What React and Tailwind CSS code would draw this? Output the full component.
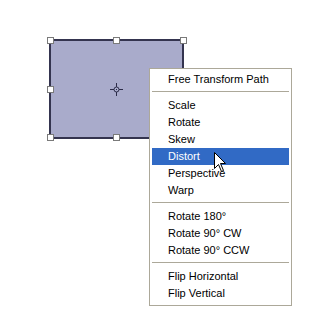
import React from 'react';

const groups = [
    ['Free Transform Path'],
    ['Scale', 'Rotate', 'Skew', 'Distort', 'Perspective', 'Warp'],
    ['Rotate 180°', 'Rotate 90° CW', 'Rotate 90° CCW'],
    ['Flip Horizontal', 'Flip Vertical'],
];

const Handle = ({ x, y }) => (
    <div
        className="absolute w-[7px] h-[7px] bg-white border border-[#7a7a7a]"
        style={{ left: x - 3, top: y - 3 }}
    />
);

const App = () => {
    const active = 'Distort';

    return (
        <div className="relative w-[311px] h-[312px] bg-white overflow-hidden" style={{ fontFamily: '"Liberation Sans", Arial, sans-serif' }}>
            {/* path shape */}
            <div className="absolute left-[49px] top-[39px] w-[135px] h-[100px] bg-[#a9abcb] border-2 border-[#34344f] rounded-[2px]" />

            {/* center point */}
            <svg className="absolute left-[109px] top-[82px]" width="15" height="15" viewBox="0 0 15 15">
                <circle cx="7.5" cy="7.5" r="2.5" fill="none" stroke="#2b2b48" strokeWidth="1" />
                <line x1="7.5" y1="1" x2="7.5" y2="5" stroke="#2b2b48" strokeWidth="1" />
                <line x1="7.5" y1="10" x2="7.5" y2="14" stroke="#2b2b48" strokeWidth="1" />
                <line x1="1" y1="7.5" x2="5" y2="7.5" stroke="#2b2b48" strokeWidth="1" />
                <line x1="10" y1="7.5" x2="14" y2="7.5" stroke="#2b2b48" strokeWidth="1" />
                <rect x="7" y="7" width="1" height="1" fill="#2b2b48" />
            </svg>

            <Handle x={50} y={40} />
            <Handle x={116} y={40} />
            <Handle x={183} y={40} />
            <Handle x={50} y={89} />
            <Handle x={50} y={137} />
            <Handle x={116} y={137} />

            {/* context menu */}
            <div className="absolute left-[149px] top-[68px] w-[143px] bg-white border border-[#aca899] pt-[2px] pb-[3px] px-[2px] text-[11px] text-black">
                {groups.map((items, gi) => (
                    <div key={gi}>
                        {gi > 0 && <div className="mt-[3px] mb-[5px] h-px bg-[#aca899]" />}
                        {items.map((label) => (
                            <div
                                key={label}
                                className={`h-[17px] leading-[17px] pl-[16px] whitespace-nowrap ${label === active ? 'bg-[#316ac5] text-white' : ''}`}
                            >
                                {label}
                            </div>
                        ))}
                    </div>
                ))}
            </div>

            {/* mouse pointer */}
            <svg className="absolute left-[214px] top-[152px]" width="13" height="21" viewBox="0 0 13 21">
                <path
                    d="M0.5 0.5 L0.5 16.5 L4.5 12.5 L7.5 19.5 L9.5 18.5 L6.5 11.5 L11.5 11.5 Z"
                    fill="#ffffff"
                    stroke="#000000"
                    strokeWidth="1"
                    strokeLinejoin="miter"
                />
            </svg>
        </div>
    );
};

export default App;
